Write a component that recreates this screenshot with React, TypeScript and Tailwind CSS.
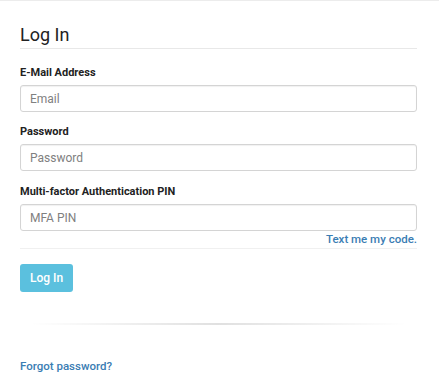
export default function App() {
  return (
    <div className="min-h-[386px] w-[439px] border-t border-[#ececec] bg-white font-['Roboto',sans-serif] text-[#222]">
      <div className="pl-5 pr-[22px] pt-[22px]">
        <h1 className="border-b border-[#e8e8e8] pb-[1px] text-[18px] leading-[24px] font-normal">Log In</h1>

        <form className="mt-[16px]">
          <label className="block text-[11px] leading-[15px] font-bold">E-Mail Address</label>
          <input
            className="mt-[5px] block h-[27px] w-full rounded-[3px] border border-[#d4d4d4] px-[9px] text-[12px] shadow-[inset_0_1px_1px_rgba(0,0,0,0.06)] placeholder:text-[#808080]"
            placeholder="Email"
          />

          <label className="mt-[12px] block text-[11px] leading-[15px] font-bold">Password</label>
          <input
            type="password"
            className="mt-[5px] block h-[27px] w-full rounded-[3px] border border-[#d4d4d4] px-[9px] text-[12px] shadow-[inset_0_1px_1px_rgba(0,0,0,0.06)] placeholder:text-[#808080]"
            placeholder="Password"
          />

          <label className="mt-[13px] block text-[11px] leading-[15px] font-bold">Multi-factor Authentication PIN</label>
          <input
            className="mt-[5px] block h-[27px] w-full rounded-[3px] border border-[#d4d4d4] px-[9px] text-[12px] shadow-[inset_0_1px_1px_rgba(0,0,0,0.06)] placeholder:text-[#808080]"
            placeholder="MFA PIN"
          />
          <div className="border-b border-[#f0f0f0] pt-[1px] pb-[1px] text-right text-[11.5px] leading-[15px] font-medium text-[#3a7db3]">
            <a href="#">Text me my code.</a>
          </div>

          <button
            type="button"
            className="mt-[15px] h-[28px] rounded-[3px] bg-[#5bc0de] px-[10px] text-[12px] font-medium text-white"
          >
            Log In
          </button>
        </form>

        <div className="mx-[10px] mt-[31px] h-[2px] bg-[linear-gradient(to_right,rgba(0,0,0,0),rgba(0,0,0,0.12),rgba(0,0,0,0))]" />

        <a href="#" className="mt-[34px] block text-[11.5px] leading-[15px] font-medium text-[#3a7db3]">
          Forgot password?
        </a>
      </div>
    </div>
  );
}
